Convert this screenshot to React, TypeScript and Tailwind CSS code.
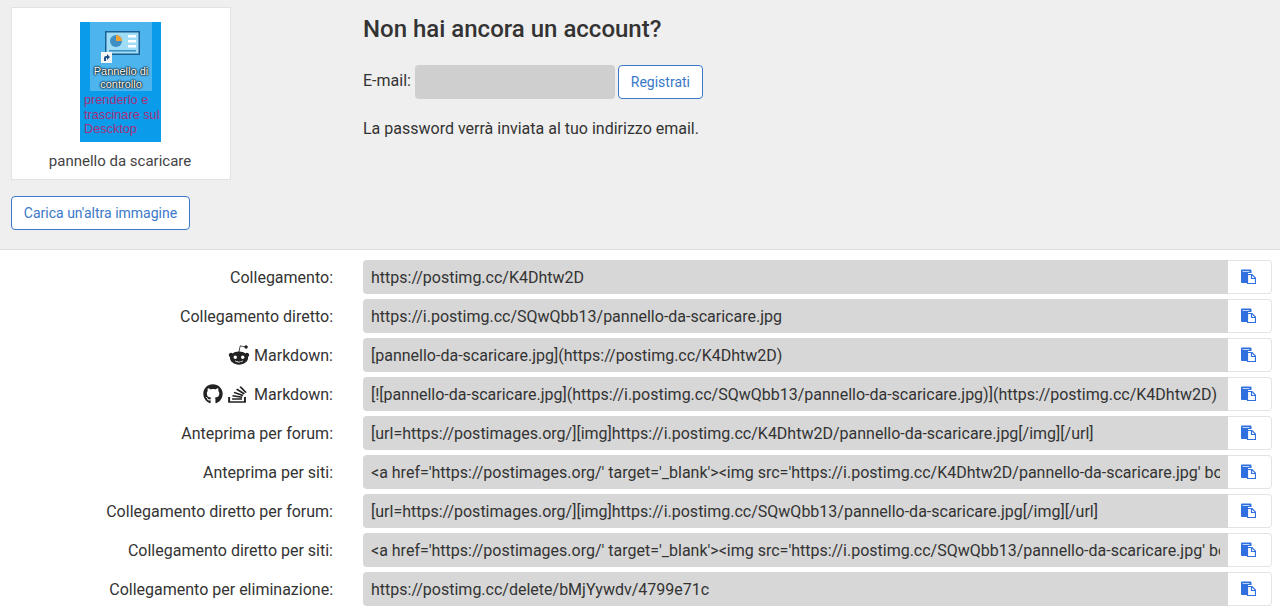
import React from "react";
import { FaRedditAlien, FaGithub, FaStackOverflow } from "react-icons/fa";

function CopyIcon() {
  return (
    <svg width="15" height="15" viewBox="0 0 15 15">
      <path d="M1 0.5h8.5a1 1 0 0 1 1 1V4H7v10H1a1 1 0 0 1-1-1V1.5a1 1 0 0 1 1-1z" fill="#2f6fe0" />
      <rect x="1.5" y="2" width="7" height="1" fill="#bcd2f7" />
      <path d="M6.5 5.5h4.5l3.5 3.5v5.5h-8z" fill="#fff" stroke="#2f6fe0" strokeWidth="1.2" />
      <path d="M10.5 5.5v4h4" fill="none" stroke="#2f6fe0" strokeWidth="1.2" />
    </svg>
  );
}

const rows: { label: string; value: string; icons?: "r" | "gs" }[] = [
  { label: "Collegamento:", value: "https://postimg.cc/K4Dhtw2D" },
  { label: "Collegamento diretto:", value: "https://i.postimg.cc/SQwQbb13/pannello-da-scaricare.jpg" },
  { label: "Markdown:", icons: "r", value: "[pannello-da-scaricare.jpg](https://postimg.cc/K4Dhtw2D)" },
  { label: "Markdown:", icons: "gs", value: "[![pannello-da-scaricare.jpg](https://i.postimg.cc/SQwQbb13/pannello-da-scaricare.jpg)](https://postimg.cc/K4Dhtw2D)" },
  { label: "Anteprima per forum:", value: "[url=https://postimages.org/][img]https://i.postimg.cc/K4Dhtw2D/pannello-da-scaricare.jpg[/img][/url]" },
  { label: "Anteprima per siti:", value: "<a href='https://postimages.org/' target='_blank'><img src='https://i.postimg.cc/K4Dhtw2D/pannello-da-scaricare.jpg' border='0' alt='pannello-da-scaricare'/></a>" },
  { label: "Collegamento diretto per forum:", value: "[url=https://postimages.org/][img]https://i.postimg.cc/SQwQbb13/pannello-da-scaricare.jpg[/img][/url]" },
  { label: "Collegamento diretto per siti:", value: "<a href='https://postimages.org/' target='_blank'><img src='https://i.postimg.cc/SQwQbb13/pannello-da-scaricare.jpg' border='0' alt='pannello-da-scaricare'/></a>" },
  { label: "Collegamento per eliminazione:", value: "https://postimg.cc/delete/bMjYywdv/4799e71c" },
];

function Thumb() {
  return (
    <div className="w-[81px] h-[120px] mr-[1px] bg-[#0a9bea] flex flex-col overflow-hidden shrink-0">
      <div className="relative mx-[10px] w-[62px] h-[69px] bg-[#4db4ee] flex flex-col items-center shrink-0">
        <svg width="35" height="24" viewBox="0 0 35 24" className="mt-[9px] ml-[2px] shrink-0">
          <rect x="0.75" y="0.75" width="33.5" height="22.5" fill="#9fdcf6" stroke="#1b5f92" strokeWidth="1.5" />
          <circle cx="11" cy="10" r="6" fill="#3f8fc4" />
          <path d="M11 10V4a6 6 0 0 1 6 6z" fill="#f0a030" />
          <rect x="23" y="4" width="8" height="2.5" fill="#fff" />
          <rect x="23" y="9" width="8" height="2.5" fill="#fff" />
          <rect x="23" y="14" width="8" height="2.5" fill="#fff" />
          <rect x="4" y="19" width="27" height="1.5" fill="#3f8fc4" />
        </svg>
        <svg width="11" height="11" viewBox="0 0 11 11" className="absolute left-[11px] top-[30px]">
          <rect width="11" height="11" fill="#f4f4f4" />
          <path d="M3 9V6a2 2 0 0 1 2-2h1V2l3 3-3 3V6H5v3z" fill="#1f4e8c" />
        </svg>
        <div className="text-[11px] leading-[13px] text-white text-center font-['Liberation_Sans',sans-serif] mt-[10px] [text-shadow:0_0_1px_#000,0_0_2px_#000,0_0_2px_#000] whitespace-nowrap">
          Pannello di<br />controllo
        </div>
      </div>
      <div className="text-[12.7px] leading-[14.6px] text-[#a8307a] font-['Liberation_Sans',sans-serif] pl-[4px] pt-[2px] whitespace-nowrap">
        prenderlo e<br />trascinare sul<br />Descktop
      </div>
    </div>
  );
}

export default function App() {
  return (
    <div className="font-['Roboto',sans-serif] text-[16px] text-[#333] bg-white h-[613px] overflow-hidden">
      <div className="h-[250px] bg-[#efefef] border-b border-[#dddddd] flex pt-[7px]">
        <div className="ml-[11px] w-[352px] shrink-0">
          <div className="w-[220px] h-[173px] bg-white border border-[#e2e2e2] flex flex-col items-center pt-[14px]">
            <Thumb />
            <div className="text-[15px] leading-[20px] mt-[9px] mr-[2px] text-[#444]">pannello da scaricare</div>
          </div>
          <button className="mt-[16px] w-[179px] h-[34px] bg-white border border-[#3a78c9] rounded-[4px] text-[14px] text-[#3a78c9]">
            Carica un'altra immagine
          </button>
        </div>
        <div>
          <h2 className="text-[24px] leading-[28px] font-medium text-[#333] mt-[8px]">Non hai ancora un account?</h2>
          <div className="flex items-center mt-[22px]">
            <span className="text-[16px] mr-[4px] -mt-[3px]">E-mail:</span>
            <div className="w-[200px] h-[34px] bg-[#cfcfcf] rounded-[4px]"></div>
            <button className="ml-[3px] w-[85px] h-[34px] bg-white border border-[#3a78c9] rounded-[4px] text-[14px] text-[#3a78c9]">
              Registrati
            </button>
          </div>
          <p className="mt-[18px] text-[16px] leading-[24px]">La password verrà inviata al tuo indirizzo email.</p>
        </div>
      </div>
      <div className="pt-[10px] flex flex-col gap-[5px]">
        {rows.map((r, i) => (
          <div key={i} className="flex h-[34px] items-center">
            <div className="w-[333px] shrink-0 flex justify-end items-center text-[16px] whitespace-nowrap">
              {r.icons === "r" && <FaRedditAlien className="w-[22px] h-[22px] mr-[4px] text-[#222]" />}
              {r.icons === "gs" && (
                <>
                  <FaGithub className="w-[20px] h-[20px] mr-[5px] text-[#222]" />
                  <FaStackOverflow preserveAspectRatio="none" className="w-[19px] h-[19px] mr-[7px] text-[#222]" />
                </>
              )}
              <span className="pt-[2px]">{r.label}</span>
            </div>
            <div className="ml-[30px] w-[865px] h-[34px] bg-[#d7d7d7] rounded-l-[4px] px-[8px] text-[16px]">
              <div className="leading-[36px] h-[34px] whitespace-nowrap overflow-hidden">{r.value}</div>
            </div>
            <div className="w-[44px] h-[34px] bg-white border border-l-0 border-[#e4e4e4] rounded-r-[4px] flex items-center justify-center pr-[2px] pb-[2px]">
              <CopyIcon />
            </div>
          </div>
        ))}
      </div>
    </div>
  );
}
